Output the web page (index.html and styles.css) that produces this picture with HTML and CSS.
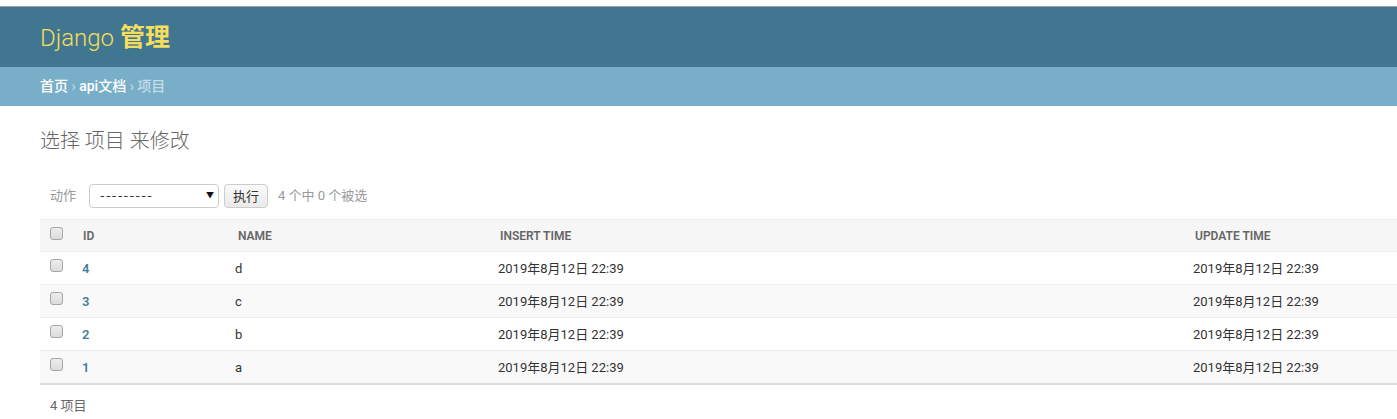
FILE: index.html
```html
<!DOCTYPE html>
<html lang="zh-CN">
<head>
<meta charset="utf-8">
<title>选择 项目 来修改</title>
<link rel="stylesheet" href="styles.css">
</head>
<body>
<div class="topstrip"></div>
<div class="header">
  <h1 class="branding">Django <span class="cjk-bold">管理</span></h1>
</div>
<div class="breadcrumbs">
  <a href="#">首页</a> › <a href="#">api文档</a> › 项目
</div>
<div class="content">
  <h1 class="title">选择 项目 来修改</h1>
  <div class="actions">
    <span class="label">动作</span>
    <div class="select"><span class="dashes">---------</span><span class="arrow">▼</span></div>
    <button class="go">执行</button>
    <span class="counter">4 个中 0 个被选</span>
  </div>
  <table class="results">
    <colgroup>
      <col class="c-check"><col class="c-id"><col class="c-name"><col class="c-insert"><col>
    </colgroup>
    <thead>
      <tr>
        <th class="check"><span class="cb"></span></th>
        <th>ID</th>
        <th>NAME</th>
        <th>INSERT TIME</th>
        <th>UPDATE TIME</th>
      </tr>
    </thead>
    <tbody>
      <tr class="row1"><td class="check"><span class="cb"></span></td><th class="idc"><a href="#">4</a></th><td class="namec">d</td><td>2019年8月12日 22:39</td><td>2019年8月12日 22:39</td></tr>
      <tr class="row2"><td class="check"><span class="cb"></span></td><th class="idc"><a href="#">3</a></th><td class="namec">c</td><td>2019年8月12日 22:39</td><td>2019年8月12日 22:39</td></tr>
      <tr class="row1"><td class="check"><span class="cb"></span></td><th class="idc"><a href="#">2</a></th><td class="namec">b</td><td>2019年8月12日 22:39</td><td>2019年8月12日 22:39</td></tr>
      <tr class="row2"><td class="check"><span class="cb"></span></td><th class="idc"><a href="#">1</a></th><td class="namec">a</td><td>2019年8月12日 22:39</td><td>2019年8月12日 22:39</td></tr>
    </tbody>
  </table>
  <p class="paginator">4 项目</p>
</div>
</body>
</html>
```
FILE: styles.css
```css
html, body {
  margin: 0;
  padding: 0;
  background: #fff;
}
body {
  font-family: Roboto, "Noto Sans CJK SC", "DejaVu Sans", sans-serif;
  font-size: 14px;
  color: #333;
  overflow: hidden;
}
a {
  color: #447e9b;
  text-decoration: none;
}
.topstrip {
  height: 6px;
  background: #fff;
  border-bottom: 1px solid #a3a3a3;
}
.header {
  height: 60px;
  box-sizing: border-box;
  padding: 0 40px;
  background: #417690;
  display: flex;
  align-items: center;
}
.branding {
  margin: 0;
  font-size: 24px;
  font-weight: 300;
  color: #f5dd5d;
  line-height: 30px;
  padding-bottom: 2px;
}
.cjk-bold {
  font-family: "Noto Sans CJK SC", sans-serif;
  font-weight: 700;
  font-size: 25px;
}
.breadcrumbs {
  height: 39px;
  box-sizing: border-box;
  padding: 10px 40px;
  background: #79aec8;
  color: #c4dce8;
  font-size: 14px;
  line-height: 19px;
  font-weight: 500;
}
.breadcrumbs a {
  color: #fff;
}
.content {
  padding: 21px 0 0 40px;
}
.title {
  margin: 0;
  font-size: 20px;
  font-weight: 300;
  color: #666;
  line-height: 28px;
  height: 28px;
}
.actions {
  margin-top: 20px;
  padding: 9px 10px 11px;
  line-height: 24px;
  color: #999;
  font-size: 13px;
  display: flex;
  align-items: center;
}
.label {
  margin-right: 13px;
  color: #999;
}
.select {
  width: 130px;
  height: 24px;
  box-sizing: border-box;
  border: 1px solid #ccc;
  border-radius: 4px;
  display: flex;
  align-items: center;
  justify-content: space-between;
  padding: 0 4px 0 10px;
  color: #333;
  background: #fff;
}
.dashes {
  font-family: "DejaVu Sans", sans-serif;
  font-size: 13px;
  letter-spacing: 1.2px;
}
.arrow {
  font-size: 8px;
  color: #111;
}
.go {
  margin-left: 5px;
  height: 24px;
  box-sizing: border-box;
  padding: 0 8px;
  border: 1px solid #ccc;
  border-radius: 4px;
  background: linear-gradient(#fafafa, #eaeaea);
  color: #333;
  font-family: "Noto Sans CJK SC", sans-serif;
  font-size: 13px;
  line-height: 20px;
}
.counter {
  margin-left: 10px;
  color: #999;
}
.results {
  width: 100%;
  border-collapse: collapse;
  table-layout: fixed;
  font-size: 13px;
}
.c-check { width: 35px; }
.c-id { width: 155px; }
.c-name { width: 262px; }
.c-insert { width: 695px; }
.results thead th {
  background: #f6f6f6;
  border-top: 1px solid #eee;
  border-bottom: 1px solid #eee;
  text-align: left;
  font-size: 12px;
  font-weight: 600;
  color: #666;
  padding: 9px 8px 7px;
  line-height: 15px;
  height: 15px;
  white-space: nowrap;
}
.results td,
.results tbody th {
  padding: 9px 8px 7px;
  line-height: 16px;
  border-bottom: 1px solid #eee;
  white-space: nowrap;
  vertical-align: top;
  text-align: left;
}
.results td:nth-child(n+3) {
  padding-left: 6px;
}
.results td.namec {
  padding-left: 5px;
}
.results tbody th.idc {
  padding-left: 7px;
  font-weight: 600;
  font-size: 13px;
}
.results tbody tr:last-child td,
.results tbody tr:last-child th {
  border-bottom: 1px solid #ddd;
}
.row1 { background: #fff; }
.row2 { background: #f9f9f9; }
.results .check {
  padding: 7px 0 8px 10px;
  vertical-align: top;
}
.results thead th.check {
  padding: 7px 0 8px 10px;
}
.cb {
  display: block;
  width: 13px;
  height: 13px;
  box-sizing: border-box;
  border: 1px solid #a6a6a6;
  border-radius: 3px;
  background: linear-gradient(#ededed, #dcdcdc);
}
.results th.idc a {
  color: #447e9b;
}
.paginator {
  margin: 0;
  border-top: 1px solid #ddd;
  padding: 10px 10px;
  line-height: 22px;
  font-size: 13px;
  color: #666;
}
```
